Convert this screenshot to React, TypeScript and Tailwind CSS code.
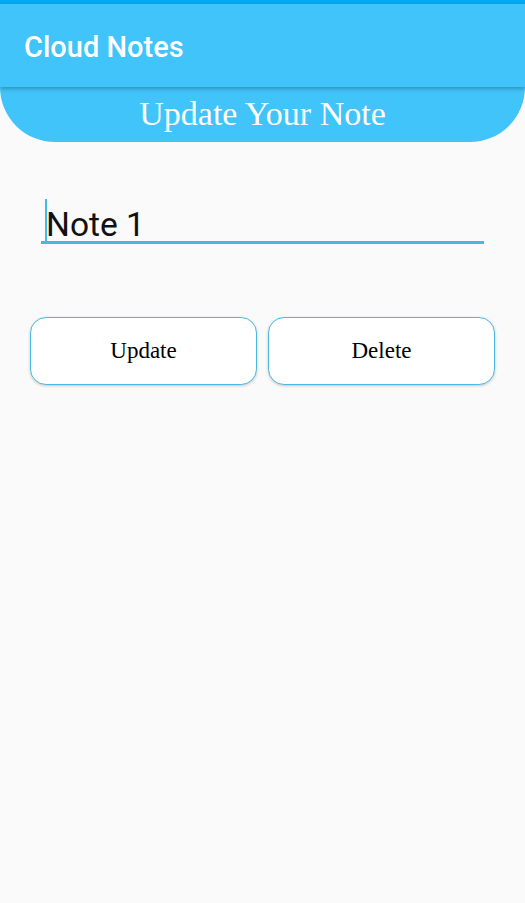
export default function App() {
  return (
    <div className="min-h-[903px] w-full bg-[#fafafa]">
      {/* status strip */}
      <div className="h-[4px] bg-[#03a9f4]" />

      {/* app bar */}
      <div className="relative z-10 flex h-[83px] items-center bg-[#40c4fa] px-6 shadow-[0_2px_4px_rgba(0,0,0,0.25)]">
        <h1 className="pt-[5px] font-['Roboto',sans-serif] text-[29px] font-medium text-white">Cloud Notes</h1>
      </div>

      {/* curved header */}
      <div className="flex h-[55px] items-center justify-center rounded-b-[55px] bg-[#40c4fa]">
        <span className="pb-[2px] font-['Liberation_Serif',serif] text-[34px] leading-none text-white">
          Update Your Note
        </span>
      </div>

      {/* note input */}
      <div className="px-[41px] pt-[58px]">
        <div className="flex h-[44px] items-end border-b-[3px] border-[#45b9e3] pl-[4px]">
          <span className="h-[42px] w-[2px] bg-[#45b9e3]" />
          <span className="-ml-[1px] font-['Roboto',sans-serif] text-[33.5px] leading-none text-[#111]">Note 1</span>
        </div>
      </div>

      {/* actions */}
      <div className="grid grid-cols-2 gap-[11px] px-[30px] pt-[73px]">
        <button className="h-[68px] rounded-[16px] border-[1.5px] border-[#4cb9e2] bg-white font-['Liberation_Serif',serif] text-[23px] text-black shadow-[0_1px_3px_rgba(0,0,0,0.2)]">
          Update
        </button>
        <button className="h-[68px] rounded-[16px] border-[1.5px] border-[#4cb9e2] bg-white font-['Liberation_Serif',serif] text-[23px] text-black shadow-[0_1px_3px_rgba(0,0,0,0.2)]">
          Delete
        </button>
      </div>
    </div>
  );
}
